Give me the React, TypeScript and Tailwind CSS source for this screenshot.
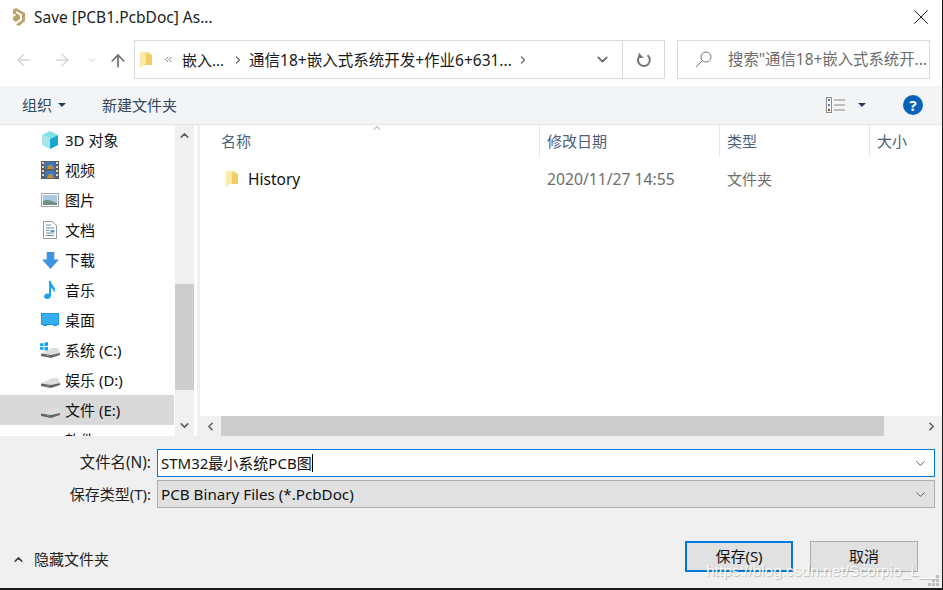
import { ArrowLeft, ArrowRight, ArrowUp, ChevronDown, ChevronLeft, ChevronRight, ChevronUp, ChevronsLeft, X } from "lucide-react";

const font = { fontFamily: '"Noto Sans", "Noto Sans CJK SC", sans-serif' };

function Folder({ className }: { className?: string }) {
	return (
		<svg viewBox="0 0 12 16" className={className}>
			<path d="M0 0h8l4 3v10H3l-3 3z" fill="#f5d77c" />
			<path d="M0 0h6v12l-3 1-3 3z" fill="#fbe9a9" />
			<path d="M6 3h6v10H6z" fill="#f2cd62" />
		</svg>
	);
}

function Logo() {
	return (
		<svg viewBox="0 0 12 18" className="w-[12px] h-[18px]">
			<path d="M0 1.500L3 0l9 5v8l-6 5-3-1.500 6-4.500V6.500L3 3v2l4 2.500v3.500l-4 3-3-2v-3l3-2-1.500-1.500L0 7z" fill="#bda36a" />
		</svg>
	);
}

function Cube() {
	return (
		<svg viewBox="0 0 18 18" className="w-[18px] h-[18px]">
			<path d="M9 0l8 4-8 4-8-4z" fill="#7fe0e8" />
			<path d="M1 4l8 4v10l-8-4z" fill="#a8e6ea" />
			<path d="M17 4l-8 4v10l8-4z" fill="#17a7cf" />
		</svg>
	);
}

function Film() {
	return (
		<svg viewBox="0 0 18 18" className="w-[18px] h-[18px]">
			<rect width="18" height="18" fill="#5e5e5e" />
			<path d="M1 1h2v2H1zM1 5h2v2H1zM1 9h2v2H1zM1 13h2v2H1zM15 1h2v2h-2zM15 5h2v2h-2zM15 9h2v2h-2zM15 13h2v2h-2z" fill="#d8d8d8" />
			<rect x="4" y="1" width="10" height="7" fill="#3b78c4" />
			<rect x="4" y="10" width="10" height="7" fill="#3b78c4" />
			<path d="M6 8l2-4h3l2 4zM6 17l2-4h3l2 4z" fill="#c98a35" />
		</svg>
	);
}

function Picture() {
	return (
		<svg viewBox="0 0 18 14" className="w-[18px] h-[14px]">
			<rect x=".5" y=".5" width="17" height="13" fill="#fff" stroke="#a3a3a3" />
			<rect x="2" y="2" width="14" height="10" fill="#a9c8e6" />
			<path d="M2 8c4-2 7-1 14 2v2H2z" fill="#6f9284" />
		</svg>
	);
}

function Doc() {
	return (
		<svg viewBox="0 0 14 18" className="w-[14px] h-[18px]">
			<path d="M.5.5h9l4 4v13H.5z" fill="#fff" stroke="#9a9a9a" />
			<path d="M3 4h5M3 7h8M3 9.500h3M3 12h8M3 14.500h8" stroke="#6f8fb0" />
			<rect x="7.500" y="9" width="4" height="2" fill="#4c9bd6" />
		</svg>
	);
}

function Download() {
	return (
		<svg viewBox="0 0 18 18" className="w-[17px] h-[17px]">
			<path d="M5 0h8v8h5l-9 10L0 8h5z" fill="#3d94e2" />
		</svg>
	);
}

function Music() {
	return (
		<svg viewBox="0 0 12 18" className="w-[12px] h-[18px]">
			<path d="M5 0h2c0 4 4 5 4 9 0 1-.5 2-1 2 0-2-2-3-3-4v8c0 2-2 3-4 3s-3-1-3-2.500S2 12 5 12.800z" fill="#1aa6ee" />
		</svg>
	);
}

function Desktop() {
	return (
		<svg viewBox="0 0 18 14" className="w-[18px] h-[14px]">
			<rect width="18" height="13" fill="#1b9ae8" />
			<rect x="1" y="1" width="16" height="10" fill="#38adf0" />
			<path d="M0 12.500h2M16 12.500h2M6 12.500h6" stroke="#fff" />
		</svg>
	);
}

function Drive({ win }: { win?: boolean }) {
	return (
		<svg viewBox="0 0 20 16" className="w-[20px] h-[16px]">
			{win && <path d="M0 1.500L3.500 1v3H0zM4.500.8L8 0v4H4.500zM0 5h3.500v3L0 7.500zM4.500 5H8v4l-3.500-.7z" fill="#10a5ef" />}
			<path d="M1 11.500L12 6h6l2 5-9 2.500z" fill="#dedede" />
			<path d="M1 11.500l10 1.500 9-2v2l-9 3-10-2z" fill="#666" />
			<rect x="7" y="13" width="2" height="1" fill="#5cc46e" />
		</svg>
	);
}

function Grip() {
	return (
		<svg viewBox="0 0 12 12" className="w-[12px] h-[12px]">
			<path d="M8 0h3v3H8zM4 4h3v3H4zM8 4h3v3H8zM0 8h3v3H0zM4 8h3v3H4zM8 8h3v3H8z" fill="#bdbdbd" />
		</svg>
	);
}

const navItems = [
	{ icon: <Cube />, label: "3D 对象" },
	{ icon: <Film />, label: "视频" },
	{ icon: <Picture />, label: "图片" },
	{ icon: <Doc />, label: "文档" },
	{ icon: <Download />, label: "下载" },
	{ icon: <Music />, label: "音乐" },
	{ icon: <Desktop />, label: "桌面" },
	{ icon: <Drive win />, label: "系统 (C:)" },
	{ icon: <Drive />, label: "娱乐 (D:)" },
	{ icon: <Drive />, label: "文件 (E:)", active: true },
	{ icon: <Drive />, label: "软件 (F:)" },
];

export default function App() {
	return (
		<div style={font} className="relative w-[943px] h-[590px] bg-white flex flex-col overflow-hidden text-[15px] leading-[20px] text-[#1a1a1a] border-b-2 border-r border-[#1a1a1a]">
			{/* title bar */}
			<div className="h-[31px] shrink-0 flex items-center pl-[13px] pr-[8px] pt-[2px]">
				<Logo />
				<span className="ml-[9px] text-[15.5px] text-[#222]">Save [PCB1.PcbDoc] As...</span>
				<X className="ml-auto w-[26px] h-[26px] text-black" strokeWidth={0.8} />
			</div>

			{/* address row */}
			<div className="h-[55px] shrink-0 flex items-start pt-[9px]">
				<div className="w-[134px] h-[39px] flex items-center pl-[14px] text-[#d0d0d0]">
					<ArrowLeft className="w-[20px] h-[20px]" strokeWidth={1.5} />
					<ArrowRight className="w-[20px] h-[20px] ml-[18px]" strokeWidth={1.5} />
					<ChevronDown className="w-[12px] h-[12px] ml-[14px]" strokeWidth={2} />
					<ArrowUp className="w-[20px] h-[20px] ml-[10px] mt-[3px] text-[#6d6d6d]" strokeWidth={2} />
				</div>
				<div className="w-[531px] h-[39px] border border-[#d9d9d9] flex items-center">
					<Folder className="w-[12px] h-[18px] ml-[5px]" />
					<ChevronsLeft className="w-[11px] h-[11px] ml-[11px] text-[#777]" />
					<span className="ml-[8px]">嵌入...</span>
					<ChevronRight className="w-[12px] h-[12px] ml-[8px] text-[#666]" strokeWidth={2.5} />
					<span className="ml-[5px] text-[15.5px]">通信18+嵌入式系统开发+作业6+631...</span>
					<ChevronRight className="w-[12px] h-[12px] ml-[5px] text-[#666]" strokeWidth={2.5} />
					<ChevronDown className="w-[17px] h-[17px] ml-auto mr-[11px] text-[#666]" strokeWidth={2.4} />
					<div className="w-[42px] h-full border-l border-[#d9d9d9] flex items-center justify-center">
						<svg viewBox="0 0 16 16" className="w-[16px] h-[16px]">
							<path d="M11.500 3.200A6 6 0 1 1 4.500 3" fill="none" stroke="#777" strokeWidth="2" />
							<path d="M2.500 0.500v5.500H8z" fill="#777" />
						</svg>
					</div>
				</div>
				<div className="w-[253px] h-[39px] ml-[12px] border border-[#d9d9d9] flex items-center">
					<svg viewBox="0 0 17 17" className="w-[17px] h-[17px] ml-[17px]">
						<circle cx="11" cy="6" r="5" fill="none" stroke="#777" />
						<path d="M7.500 9.500L1 16" stroke="#777" />
					</svg>
					<span className="ml-[16px] text-[15.4px] text-[#6d6d6d] whitespace-nowrap">搜索"通信18+嵌入式系统开...</span>
				</div>
			</div>

			{/* toolbar */}
			<div className="h-[39px] shrink-0 bg-[#f3f4f6] border-b border-[#e4e4e4] flex items-center pl-[22px] pr-[19px] text-[#33475f]">
				<span>组织</span>
				<span className="ml-[6px] w-0 h-0 border-x-[4px] border-x-transparent border-t-[4px] border-t-[#2b3d55]" />
				<span className="ml-[36px]">新建文件夹</span>
				<svg viewBox="0 0 19 16" className="ml-auto w-[19px] h-[16px]">
					<rect x=".5" y=".5" width="5" height="15" fill="#fff" stroke="#8a8a8a" />
					<path d="M2 2h2v2H2zM2 7h2v2H2z" fill="#4d7f9e" />
					<path d="M2 12h2v2H2z" fill="#b5322a" />
					<path d="M8 3h11M8 8h11M8 13h11" stroke="#8a8a8a" />
				</svg>
				<span className="ml-[13px] w-0 h-0 border-x-[4px] border-x-transparent border-t-[4px] border-t-[#2b3d55]" />
				<span className="ml-[37px] w-[20px] h-[20px] rounded-full bg-[#0a63b8] text-white font-bold flex items-center justify-center">?</span>
			</div>

			{/* main pane */}
			<div className="h-[311px] shrink-0 flex">
				<div className="w-[174px] overflow-hidden">
					{navItems.map((item) => (
						<div key={item.label} className={`h-[30px] shrink-0 flex items-center ${item.active ? "bg-[#d9d9d9]" : ""}`}>
							<div className="w-[65px] pl-[40px] pr-[5px] flex justify-center">{item.icon}</div>
							<span className="text-[#111] whitespace-nowrap -mt-[1px]">{item.label}</span>
						</div>
					))}
				</div>
				<div className="ml-[1px] w-[19px] bg-[#f0f0f0] flex flex-col items-center">
					<ChevronUp className="w-[13px] h-[13px] mt-[4px] text-[#606060]" strokeWidth={3} />
					<div className="mt-[142px] w-full h-[106px] bg-[#cdcdcd]" />
					<ChevronDown className="w-[13px] h-[13px] mt-[29px] text-[#606060]" strokeWidth={3} />
				</div>
				<div className="ml-[3px] w-[3px] bg-[#f0f0f0]" />
				<div className="flex-1 min-w-0 flex flex-col">
					<div className="h-[32px] flex text-[#4c607a]">
						<div className="w-[340px] border-r border-[#e5e5e5] pl-[21px] pt-[6px] relative">
							名称
							<ChevronUp className="absolute left-[171px] -top-[3px] w-[12px] h-[12px] text-[#777]" strokeWidth={1.5} />
						</div>
						<div className="w-[180px] border-r border-[#e5e5e5] pl-[7px] pt-[6px]">修改日期</div>
						<div className="w-[150px] border-r border-[#e5e5e5] pl-[7px] pt-[6px]">类型</div>
						<div className="pl-[7px] pt-[6px]">大小</div>
					</div>
					<div className="h-[44px] flex items-center">
						<div className="w-[340px] flex items-center pl-[26px]">
							<Folder className="w-[12px] h-[16px]" />
							<span className="ml-[10px] text-[15.5px] text-[#111] -mt-[1px]">History</span>
						</div>
						<div className="w-[180px] pl-[7px] text-[15.7px] text-[#6d6d6d] -mt-[1px]">2020/11/27 14:55</div>
						<div className="pl-[7px] text-[#6d6d6d] -mt-[1px]">文件夹</div>
					</div>
					<div className="mt-auto h-[20px] bg-[#f0f0f0] flex items-center">
						<div className="w-[21px] flex justify-center">
							<ChevronLeft className="w-[13px] h-[13px] text-[#606060]" strokeWidth={3} />
						</div>
						<div className="w-[663px] h-full bg-[#cdcdcd]" />
						<ChevronRight className="w-[13px] h-[13px] ml-auto mr-[4px] text-[#606060]" strokeWidth={3} />
					</div>
				</div>
			</div>

			{/* bottom form */}
			<div className="flex-1 bg-[#f0f0f0] relative flex flex-col pt-[13px]">
				<div className="flex items-center h-[28px]">
					<span className="w-[151px] text-right text-[#222] text-[15.4px]">文件名(N):</span>
					<div className="ml-[6px] w-[778px] h-[28px] bg-white border border-[#0078d7] flex items-center pl-[3px] pr-[6px]">
						<span className="text-[#111]">STM32最小系统PCB图</span>
						<span className="w-[1px] h-[18px] bg-black" />
						<ChevronDown className="ml-auto w-[15px] h-[15px] text-[#555]" strokeWidth={1.5} />
					</div>
				</div>
				<div className="flex items-center h-[28px] mt-[3px]">
					<span className="w-[151px] text-right text-[#222]">保存类型(T):</span>
					<div className="ml-[6px] w-[778px] h-[28px] bg-[#e1e1e1] border border-[#adadad] flex items-center pl-[3px] pr-[6px]">
						<span className="text-[15.2px] text-[#111]">PCB Binary Files (*.PcbDoc)</span>
						<ChevronDown className="ml-auto w-[15px] h-[15px] text-[#555]" strokeWidth={1.5} />
					</div>
				</div>
				<div className="flex items-center mt-[33px] h-[31px]">
					<ChevronUp className="ml-[12px] w-[13px] h-[13px] text-[#444] mt-[5px]" strokeWidth={3} />
					<span className="ml-[9px] text-[#222] mt-[5px]">隐藏文件夹</span>
					<button className="ml-auto w-[108px] h-[31px] bg-[#e1e1e1] border-2 border-[#0078d7] text-[#111] pb-[2px]">保存(S)</button>
					<button className="ml-[17px] mr-[24px] w-[108px] h-[31px] bg-[#e1e1e1] border border-[#adadad] text-[#111] pb-[2px]">取消</button>
				</div>
				<span className="absolute right-[6px] bottom-[7px] text-[15.5px] text-white/90 [font-family:'Liberation_Sans',sans-serif] [text-shadow:1px_1px_1px_rgba(120,120,120,0.45)] whitespace-nowrap">https://blog.csdn.net/Scorpio_L__</span>
				<div className="absolute right-[2px] bottom-[1px]"><Grip /></div>
			</div>
		</div>
	);
}
